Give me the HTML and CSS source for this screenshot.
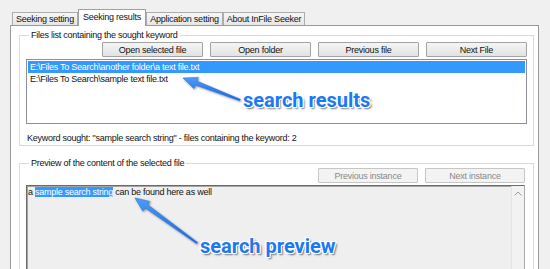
FILE: index.html
```html
<!DOCTYPE html>
<html>
<head>
<meta charset="utf-8">
<link rel="stylesheet" href="styles.css">
</head>
<body>
<div class="window">
  <div class="tabs">
    <div class="tab t1">Seeking setting</div>
    <div class="tab active t2">Seeking results</div>
    <div class="tab t3">Application setting</div>
    <div class="tab t4">About InFile Seeker</div>
  </div>
  <div class="panel">
    <fieldset class="group g1">
      <legend>Files list containing the sought keyword</legend>
      <div class="btnrow">
        <button class="btn">Open selected file</button>
        <button class="btn">Open folder</button>
        <button class="btn">Previous file</button>
        <button class="btn">Next File</button>
      </div>
      <div class="list">
        <div class="row sel">E:\Files To Search\another folder\a text file.txt</div>
        <div class="row">E:\Files To Search\sample text file.txt</div>
      </div>
      <div class="status">Keyword sought: "sample search string" - files containing the keyword: 2</div>
    </fieldset>
    <fieldset class="group g2">
      <legend>Preview of the content of the selected file</legend>
      <div class="btnrow">
        <button class="btn dis">Previous instance</button>
        <button class="btn dis">Next instance</button>
      </div>
      <div class="preview">
        <div class="ptext">a <span class="hl">sample search string</span> can be found here as well</div>
        <div class="vscroll">
          <svg width="8" height="5" viewBox="0 0 8 5"><polyline points="0.5,4.5 4,1 7.5,4.5" fill="none" stroke="#9a9a9a" stroke-width="1"/></svg>
        </div>
      </div>
    </fieldset>
  </div>
</div>

<svg class="arrows" width="550" height="269" viewBox="0 0 550 269">
  <defs>
    <linearGradient id="ag" x1="0" y1="0" x2="0" y2="1">
      <stop offset="0" stop-color="#4d9cf8"/>
      <stop offset="1" stop-color="#1463e0"/>
    </linearGradient>
  </defs>
  <polygon class="arr" points="183,78 198.3,77.4 196.8,81.1 240.3,99.3 239.7,100.7 195.4,84.9 193.9,88.6"/>
  <polygon class="arr" points="135,198 149.8,201.4 147.5,204.6 197.5,242.4 196.5,243.6 145.1,207.8 142.8,211.1"/>
</svg>
<div class="note n1">search results</div>
<div class="note n2">search preview</div>
</body>
</html>
```
FILE: styles.css
```css
* { box-sizing: border-box; }
html, body { margin: 0; padding: 0; }
body {
  width: 550px;
  height: 269px;
  overflow: hidden;
  background: #f0f0f0;
  position: relative;
  font-family: "Liberation Sans", Arial, sans-serif;
  font-size: 9px;
  letter-spacing: -0.25px;
  color: #111;
}
.window {
  padding: 9px 0 0 10px;
}
.tabs {
  display: flex;
  align-items: flex-end;
  height: 17px;
  padding-left: 2px;
  margin-bottom: -1px;
  position: relative;
  z-index: 2;
}
.tab {
  height: 13px;
  margin-bottom: 1px;
  border: 1px solid #acacac;
  border-bottom: none;
  background: linear-gradient(#f6f6f6, #e6e6e6);
  display: flex;
  align-items: center;
  justify-content: center;
  line-height: 11px;
  white-space: nowrap;
}
.tab.active {
  height: 17px;
  margin-bottom: 0;
  background: #fff;
  border-color: #a0a0a0;
  align-items: flex-start;
  padding-top: 2px;
}
.t1 { width: 66px; }
.t2 { width: 68px; }
.t3 { width: 77px; }
.t4 { width: 82px; }
.panel {
  width: 529px;
  height: 244px;
  background: #fff;
  border: 1px solid #999;
  border-bottom: none;
  padding-top: 3px;
  position: relative;
  z-index: 1;
  overflow: hidden;
}
.group {
  margin: 0 4px 0 8px;
  border: 1px solid #dadada;
  padding: 1px 6px 1px 6px;
  min-width: 0;
}
legend {
  padding: 0 2px;
  margin-left: 3px;
  line-height: 12px;
  height: 12px;
}
.btnrow {
  display: flex;
  justify-content: flex-end;
  gap: 7px;
}
.btn {
  width: 101px;
  height: 15px;
  margin: 0;
  padding: 0;
  font: inherit;
  letter-spacing: inherit;
  color: #111;
  border: 1px solid #a3a3a3;
  border-radius: 1px;
  background: linear-gradient(#f5f5f5, #e2e2e2);
  line-height: 12px;
}
.list {
  margin-top: 2px;
  height: 65px;
  border: 1px solid #8a8f98;
  padding: 1px;
  background: #fff;
}
.row {
  height: 12px;
  line-height: 12px;
  padding-left: 2px;
  white-space: nowrap;
}
.row.sel {
  background: #3399ff;
  color: #fff;
}
.status {
  margin-top: 8px;
  padding-left: 1px;
  line-height: 12px;
  height: 12px;
}
.g2 {
  margin-top: 11px;
  padding: 0 8px 0 6px;
  height: 112px;
  border-bottom: none;
}
.g2 .btnrow { margin-top: -1px; }
.g2 .btn { width: 100px; }
.btn.dis {
  color: #8a8a8a;
  background: #f3f3f3;
  border-color: #c6c6c6;
}
.preview {
  margin-top: 2px;
  height: 84px;
  display: flex;
  background: #efefef;
  border: 1px solid #a8a8a8;
  border-bottom: none;
  border-top-color: #6a6a6a;
  border-left-color: #6a6a6a;
  box-shadow: inset 1px 1px 0 #a5a5a5;
}
.ptext {
  flex: 1;
  padding-left: 1px;
  line-height: 12px;
  white-space: nowrap;
}
.hl {
  background: #3399ff;
  color: #fff;
}
.vscroll {
  width: 13px;
  background: #f2f2f2;
  border-left: 1px solid #e4e4e4;
  display: flex;
  justify-content: center;
  align-items: flex-start;
  padding-top: 5px;
}
.vscroll svg { display: block; }
.arrows {
  position: absolute;
  left: 0;
  top: 0;
  z-index: 5;
  pointer-events: none;
}
.arr {
  fill: url(#ag);
  stroke: #2a78ee;
  stroke-width: 0.6;
  filter: drop-shadow(1px 1px 1px rgba(0,0,0,0.45));
}
.note {
  position: absolute;
  z-index: 6;
  font-family: Roboto, "Liberation Sans", sans-serif;
  font-weight: 700;
  font-size: 20px;
  line-height: 20px;
  letter-spacing: 0;
  color: #1c78f3;
  white-space: nowrap;
  text-shadow: -1px -1px 0 #fff, 1px -1px 0 #fff, -1px 1px 0 #fff, 1px 1px 0 #fff,
    0 -1px 0 #fff, 0 1px 0 #fff, -1px 0 0 #fff, 1px 0 0 #fff,
    2px 2px 2px rgba(0,0,0,0.55);
}
.n1 { left: 243px; top: 90px; }
.n2 { left: 200px; top: 236px; }
```
